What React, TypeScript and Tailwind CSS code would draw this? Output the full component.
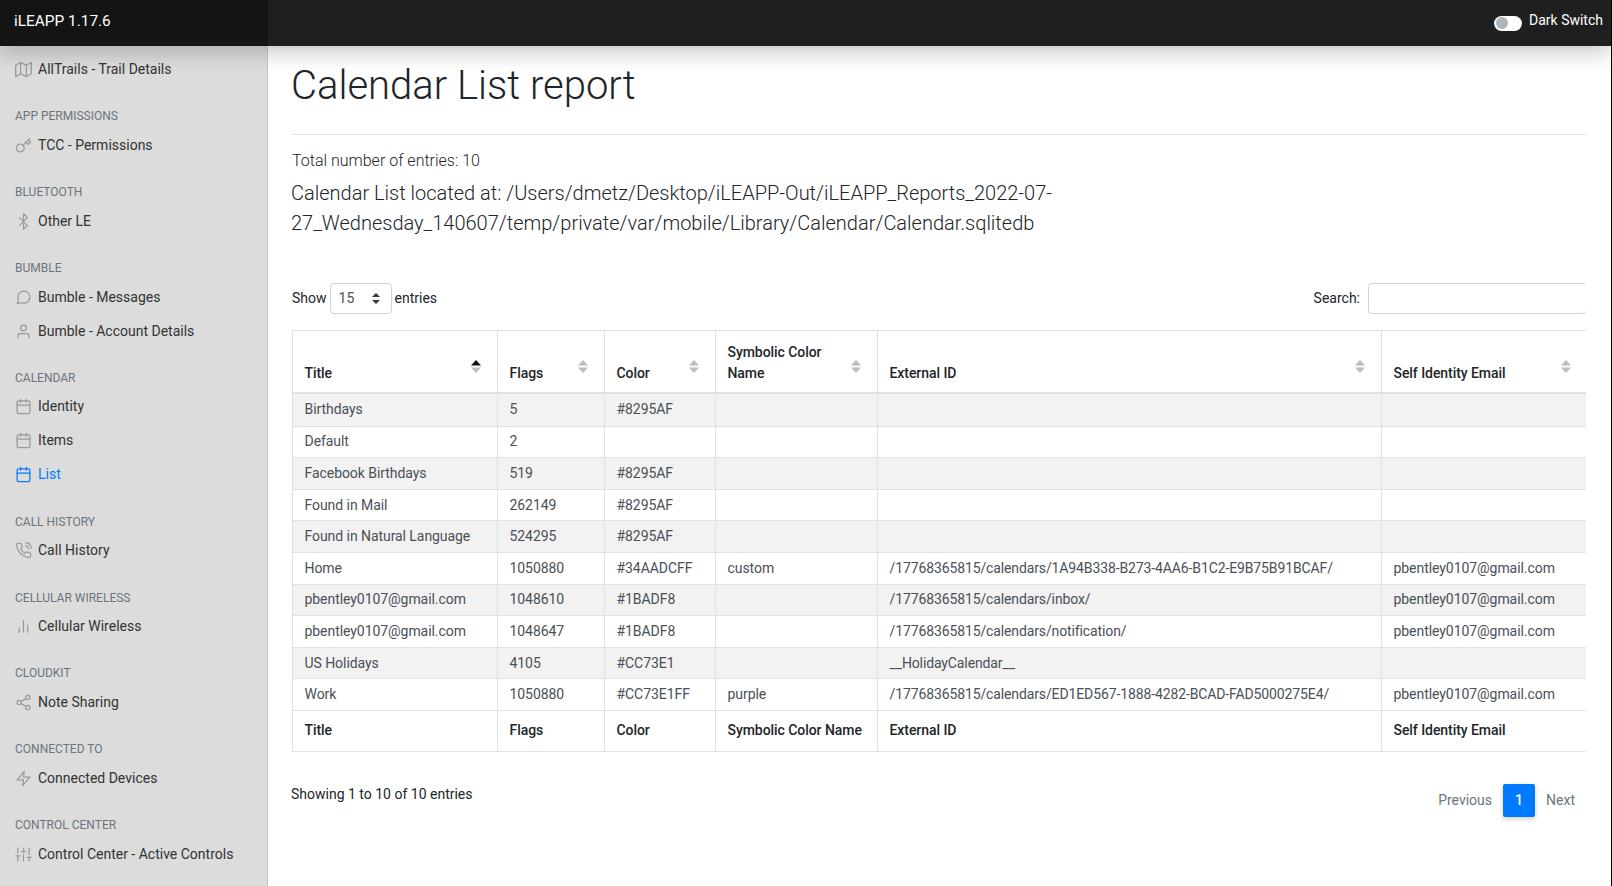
import React from 'react';
import {
  FiMap,
  FiKey,
  FiBluetooth,
  FiMessageCircle,
  FiUser,
  FiCalendar,
  FiPhoneCall,
  FiBarChart2,
  FiShare2,
  FiZap,
  FiSliders,
} from 'react-icons/fi';

type NavItem = { name: string; icon: React.ComponentType<any>; active?: boolean };

const sections: { title?: string; items: NavItem[] }[] = [
  { items: [{ name: 'AllTrails - Trail Details', icon: FiMap }] },
  { title: 'APP PERMISSIONS', items: [{ name: 'TCC - Permissions', icon: FiKey }] },
  { title: 'BLUETOOTH', items: [{ name: 'Other LE', icon: FiBluetooth }] },
  {
    title: 'BUMBLE',
    items: [
      { name: 'Bumble - Messages', icon: FiMessageCircle },
      { name: 'Bumble - Account Details', icon: FiUser },
    ],
  },
  {
    title: 'CALENDAR',
    items: [
      { name: 'Identity', icon: FiCalendar },
      { name: 'Items', icon: FiCalendar },
      { name: 'List', icon: FiCalendar, active: true },
    ],
  },
  { title: 'CALL HISTORY', items: [{ name: 'Call History', icon: FiPhoneCall }] },
  { title: 'CELLULAR WIRELESS', items: [{ name: 'Cellular Wireless', icon: FiBarChart2 }] },
  { title: 'CLOUDKIT', items: [{ name: 'Note Sharing', icon: FiShare2 }] },
  { title: 'CONNECTED TO', items: [{ name: 'Connected Devices', icon: FiZap }] },
  { title: 'CONTROL CENTER', items: [{ name: 'Control Center - Active Controls', icon: FiSliders }] },
];

const columns = [
  { name: 'Title', width: 'w-[205px]', sorted: true },
  { name: 'Flags', width: 'w-[107px]' },
  { name: 'Color', width: 'w-[111px]' },
  { name: 'Symbolic Color Name', width: 'w-[162px]' },
  { name: 'External ID', width: 'w-[504px]' },
  { name: 'Self Identity Email', width: 'w-[206px]' },
];

const rows = [
  ['Birthdays', '5', '#8295AF', '', '', ''],
  ['Default', '2', '', '', '', ''],
  ['Facebook Birthdays', '519', '#8295AF', '', '', ''],
  ['Found in Mail', '262149', '#8295AF', '', '', ''],
  ['Found in Natural Language', '524295', '#8295AF', '', '', ''],
  ['Home', '1050880', '#34AADCFF', 'custom', '/17768365815/calendars/1A94B338-B273-4AA6-B1C2-E9B75B91BCAF/', 'pbentley0107@gmail.com'],
  ['pbentley0107@gmail.com', '1048610', '#1BADF8', '', '/17768365815/calendars/inbox/', 'pbentley0107@gmail.com'],
  ['pbentley0107@gmail.com', '1048647', '#1BADF8', '', '/17768365815/calendars/notification/', 'pbentley0107@gmail.com'],
  ['US Holidays', '4105', '#CC73E1', '', '__HolidayCalendar__', ''],
  ['Work', '1050880', '#CC73E1FF', 'purple', '/17768365815/calendars/ED1ED567-1888-4282-BCAD-FAD5000275E4/', 'pbentley0107@gmail.com'],
];

function SortArrows({ active }: { active?: boolean }) {
  return (
    <svg viewBox="0 0 10 13" className="absolute right-[16.5px] top-[29px] h-[13px] w-[10px]">
      <path d="M5 0 L10 5.5 L0 5.5 Z" fill={active ? '#111111' : '#bdbdbd'} />
      <path d="M5 13 L10 7.5 L0 7.5 Z" fill="#bdbdbd" />
    </svg>
  );
}

export default function App() {
  return (
    <div className="flex h-screen flex-col overflow-hidden border-r border-black bg-white font-['Roboto',sans-serif] text-[#212529]">
      <header className="relative z-10 flex h-[46px] shrink-0 items-center justify-between bg-[#1f1f1f] shadow-[0_8px_20px_rgba(0,0,0,0.2)]">
        <div className="flex h-full w-[268px] items-center bg-[#141414] pb-[2px] pl-[14px] text-[15.4px] text-white">iLEAPP 1.17.6</div>
        <div className="flex items-center gap-[7px] pr-[8px] text-[14px] text-white">
          <span className="flex h-[15px] w-[28px] items-center rounded-full bg-white pl-[2px]">
            <span className="h-[12px] w-[12px] rounded-full bg-[#adb5bd]" />
          </span>
          <span className="-mt-[5px]">Dark Switch</span>
        </div>
      </header>

      <div className="flex min-h-0 flex-1">
        <aside className="w-[268px] shrink-0 overflow-hidden border-r border-[#c6c6c6] bg-[#dcdcdc] pt-[6.5px]">
          {sections.map((section, i) => (
            <div key={i} className="mb-[17.85px]">
              {section.title && (
                <div className="flex h-[24px] items-center pl-[15px] text-[12px] text-[#6c757d]">{section.title}</div>
              )}
              {section.items.map((item) => (
                <div
                  key={item.name}
                  className={`flex h-[34px] items-center gap-[6px] pl-[15px] text-[14px] ${
                    item.active ? 'text-[#007bff]' : 'text-[#333333]'
                  }`}
                >
                  <item.icon size={17} strokeWidth={1.75} className={`shrink-0 ${item.active ? 'text-[#007bff]' : 'text-[#999999]'}`} />
                  <span>{item.name}</span>
                </div>
              ))}
            </div>
          ))}
        </aside>

        <main className="min-w-0 flex-1 overflow-hidden pl-[24px] pr-[25px]">
          <h1 className="-ml-[1px] pt-[16px] text-[40px] font-light leading-[48px]">Calendar List report</h1>
          <hr className="mt-[24px] border-[#dee2e6]" />
          <p className="mt-[14px] text-[16px] font-light leading-[24px]">Total number of entries: 10</p>
          <p className="-ml-[1px] mt-[5px] text-[20px] font-light leading-[30px]">
            Calendar List located at: /Users/dmetz/Desktop/iLEAPP-Out/iLEAPP_Reports_2022-07-
            <br />
            27_Wednesday_140607/temp/private/var/mobile/Library/Calendar/Calendar.sqlitedb
          </p>

          <div className="mt-[45px] flex items-center justify-between text-[14px]">
            <div className="flex items-center gap-[3px]">
              <span>Show</span>
              <div className="flex h-[31px] w-[62px] items-center justify-between rounded-[4px] border border-[#ced4da] pl-[8px] pr-[11px] text-[#495057]">
                <span>15</span>
                <svg viewBox="0 0 8 11" className="h-[11px] w-[8px]">
                  <path d="M4 0 L8 4 L0 4 Z M4 11 L8 7 L0 7 Z" fill="#343a40" />
                </svg>
              </div>
              <span>entries</span>
            </div>
            <div className="flex items-center gap-[8px]">
              <span>Search:</span>
              <input className="h-[31px] w-[218px] rounded-[4px] border border-r-0 border-[#ced4da] bg-white" />
            </div>
          </div>

          <div className="mt-[16px] overflow-hidden">
            <table className="w-[1295px] table-fixed border-collapse text-[14px]">
              <thead>
                <tr className="h-[62px]">
                  {columns.map((col) => (
                    <th
                      key={col.name}
                      className={`relative border border-b-2 border-[#dee2e6] px-[11.5px] pb-[8px] text-left align-bottom font-medium leading-[21px] tracking-[-0.06px] ${col.width}`}
                    >
                      <span className="block pr-[24px]">{col.name}</span>
                      <SortArrows active={col.sorted} />
                    </th>
                  ))}
                </tr>
              </thead>
              <tbody>
                {rows.map((row, i) => (
                  <tr key={i} className={`${i === 0 ? 'h-[33.6px]' : 'h-[31.6px]'} ${i % 2 === 0 ? 'bg-[#f2f2f2]' : 'bg-white'}`}>
                    {row.map((cell, j) => (
                      <td
                        key={j}
                        className={`overflow-hidden whitespace-nowrap border border-[#dee2e6] px-[11.5px] py-0 leading-[21px] text-[#495057] ${
                          j === 4 ? 'tracking-[-0.12px]' : 'tracking-[-0.06px]'
                        }`}
                      >
                        {cell}
                      </td>
                    ))}
                  </tr>
                ))}
              </tbody>
              <tfoot>
                <tr className="h-[41px]">
                  {columns.map((col) => (
                    <th key={col.name} className="whitespace-nowrap border border-[#dee2e6] px-[11.5px] py-0 text-left font-medium leading-[21px] tracking-[-0.06px]">
                      {col.name}
                    </th>
                  ))}
                </tr>
              </tfoot>
            </table>
          </div>

          <div className="mt-[20px] flex items-start justify-between text-[14px]">
            <span className="-ml-[1px] mt-[12px]">Showing 1 to 10 of 10 entries</span>
            <div className="mt-[12px] flex items-center pr-[11px] text-[#6c757d]">
              <span className="mr-[11px]">Previous</span>
              <span className="flex h-[33px] w-[32px] items-center justify-center rounded-[2px] bg-[#007bff] font-medium text-white shadow-[0_2px_5px_rgba(0,0,0,0.2)]">1</span>
              <span className="ml-[11px]">Next</span>
            </div>
          </div>
        </main>
      </div>
    </div>
  );
}
